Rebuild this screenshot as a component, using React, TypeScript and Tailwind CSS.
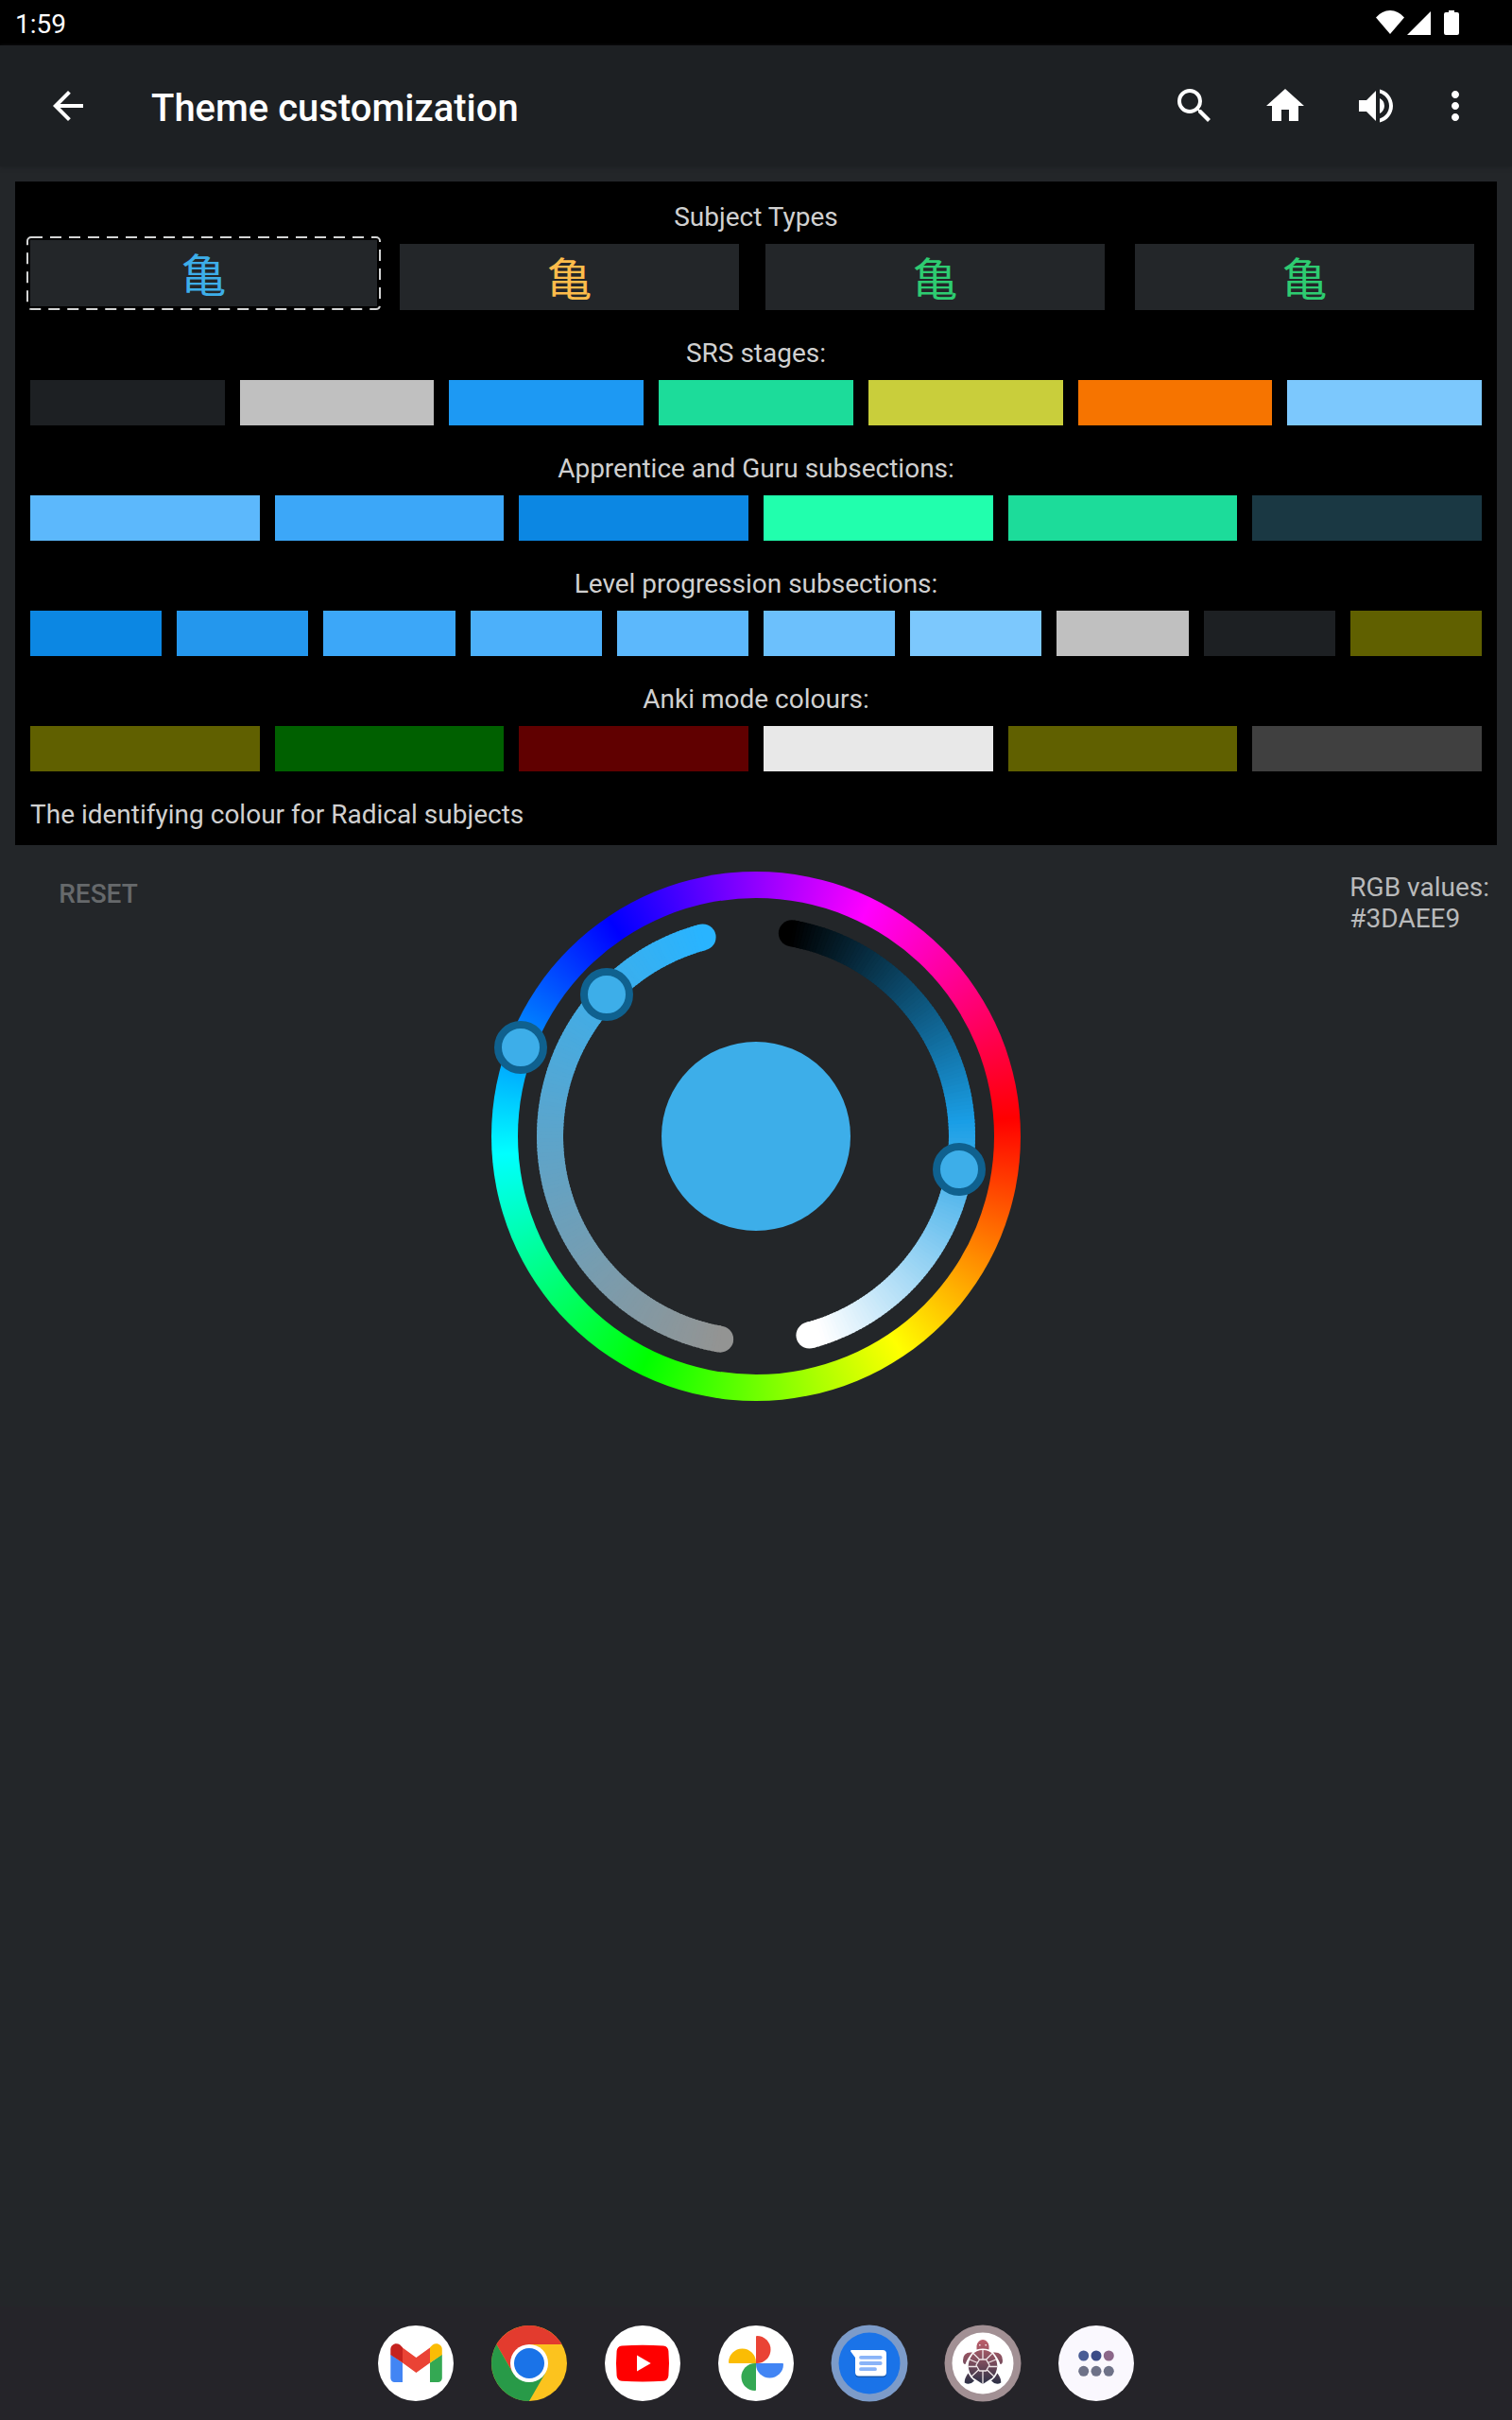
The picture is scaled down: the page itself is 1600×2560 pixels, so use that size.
import { useState } from "react";
import type { ReactNode } from "react";
import { MdArrowBack, MdHome, MdMoreVert, MdSearch, MdVolumeUp } from "react-icons/md";

type Swatch = { name: string; fill: string };

const SUBJECTS = [
  { name: "Radical", tile: "-mt-1 h-[70px] flex-[367]", text: "text-[#3daee9]" },
  { name: "Kanji", tile: "ml-6 h-[70px] flex-[359]", text: "text-[#fdbc4b]" },
  { name: "Vocabulary", tile: "ml-7 h-[70px] flex-[359]", text: "text-[#2ecc71]" },
  { name: "Kana vocabulary", tile: "ml-8 h-[70px] flex-[359]", text: "text-[#2ecc71]" },
];

const STAGES: Swatch[] = [
  { name: "Locked", fill: "bg-[#1d2023]" },
  { name: "Initiate", fill: "bg-[#c0c0c0]" },
  { name: "Apprentice", fill: "bg-[#1d99f3]" },
  { name: "Guru", fill: "bg-[#1cdc9a]" },
  { name: "Master", fill: "bg-[#c9ce3b]" },
  { name: "Enlightened", fill: "bg-[#f67400]" },
  { name: "Burned", fill: "bg-[#7cc8fd]" },
];

const SUBSECTIONS: Swatch[] = [
  { name: "Apprentice 1", fill: "bg-[#5cb8fc]" },
  { name: "Apprentice 2", fill: "bg-[#3ca7f8]" },
  { name: "Apprentice 3", fill: "bg-[#0c87e3]" },
  { name: "Guru 1", fill: "bg-[#21ffad]" },
  { name: "Guru 2", fill: "bg-[#1cdc9a]" },
  { name: "Ten or more", fill: "bg-[#1a3843]" },
];

const LEVELS: Swatch[] = [
  { name: "Progress 1", fill: "bg-[#0c87e3]" },
  { name: "Progress 2", fill: "bg-[#2497ed]" },
  { name: "Progress 3", fill: "bg-[#3ca7f8]" },
  { name: "Progress 4", fill: "bg-[#4cb0fa]" },
  { name: "Progress 5", fill: "bg-[#5cb8fc]" },
  { name: "Progress 6", fill: "bg-[#6cc0fc]" },
  { name: "Progress 7", fill: "bg-[#7cc8fd]" },
  { name: "Initiate level", fill: "bg-[#c0c0c0]" },
  { name: "Locked level", fill: "bg-[#1d2023]" },
  { name: "Bookmark", fill: "bg-[#606000]" },
];

const ANKI: Swatch[] = [
  { name: "Show", fill: "bg-[#606000]" },
  { name: "Correct", fill: "bg-[#006000]" },
  { name: "Incorrect", fill: "bg-[#600000]" },
  { name: "Text", fill: "bg-[#e8e8e8]" },
  { name: "Ignore", fill: "bg-[#606000]" },
  { name: "Next", fill: "bg-[#404040]" },
];

function Section({ title, columns, swatches }: { title: string; columns: string; swatches: Swatch[] }) {
  return (
    <section>
      <h2 className="pt-[30px] pb-3 text-center">{title}</h2>
      <div className={`grid gap-4 ${columns}`}>
        {swatches.map((s) => (
          <button key={s.name} type="button" aria-label={s.name} className={`h-12 ${s.fill}`} />
        ))}
      </div>
    </section>
  );
}

const point = (radius: number, degrees: number) => {
  const a = (degrees * Math.PI) / 180;
  return { x: radius * Math.sin(a), y: -radius * Math.cos(a) };
};

/** A round-capped arc whose colour follows its sweep; angles run clockwise from the top. */
function GradientArc({ from, to, color }: { from: number; to: number; color: (t: number) => string }) {
  const steps = 156;
  const radius = 218;
  const start = point(radius, from);
  const end = point(radius, to);
  const span = (to - from) / steps;
  return (
    <g>
      <circle cx={start.x} cy={start.y} r={14} fill={color(0)} />
      <circle cx={end.x} cy={end.y} r={14} fill={color(1)} />
      {Array.from({ length: steps }, (_, i) => {
        const a = point(radius, from + span * i);
        const b = point(radius, from + span * (i + (i < steps - 1 ? 1.5 : 1)));
        return (
          <line key={i} x1={a.x} y1={a.y} x2={b.x} y2={b.y} strokeWidth={28} stroke={color((i + 0.5) / steps)} />
        );
      })}
    </g>
  );
}

const saturation = (t: number) =>
  `rgb(${Math.round(41 + 106 * t)}, ${Math.round(180 - 32 * t)}, ${Math.round(255 - 108 * t)})`;
const lightness = (t: number) => `hsl(201, 80%, ${Math.min(100, Math.round(t * 1020) / 10)}%)`;

function Knob({ x, y }: { x: number; y: number }) {
  return <circle cx={x} cy={y} r={24} fill="#3daee9" stroke="#0f618f" strokeWidth={8} />;
}

function ColorWheel() {
  return (
    <div className="relative grid size-[560px] place-items-center rounded-full bg-[conic-gradient(from_86deg,#f00,#ff0,#0f0,#0ff,#00f,#f0f,#f00)]">
      <div className="size-[504px] rounded-full bg-[#232629]" />
      <svg viewBox="-280 -280 560 560" className="absolute inset-0 overflow-visible" aria-hidden="true">
        <GradientArc from={-15} to={-170} color={saturation} />
        <GradientArc from={10} to={165} color={lightness} />
        <circle r={100} fill="#3daee9" />
        <Knob x={-249} y={-94} />
        <Knob x={-158} y={-150} />
        <Knob x={215} y={35} />
      </svg>
      <input type="range" aria-label="Hue" min={0} max={360} defaultValue={201} className="sr-only" />
      <input type="range" aria-label="Saturation" min={0} max={100} defaultValue={80} className="sr-only" />
      <input type="range" aria-label="Lightness" min={0} max={100} defaultValue={58} className="sr-only" />
    </div>
  );
}

function GmailIcon() {
  return (
    <>
      <circle cx="40" cy="40" r="40" fill="#fff" />
      <path d="M13.3 30.5 26 39.5V60h-8.5a4.2 4.2 0 0 1-4.2-4.2z" fill="#4285f4" />
      <path d="M67.8 30.5 55 39.5V60h8.6a4.2 4.2 0 0 0 4.2-4.2z" fill="#34a853" />
      <path d="M26 23.5 40.4 34 55 23.5v16L40.4 50 26 39.5z" fill="#ea4335" />
      <path d="M13.3 31v-5.6c0-5.2 5.9-7.9 10-4.8l2.7 2.6v16.3z" fill="#c5221f" />
      <path d="M67.8 31v-5.6c0-5.2-5.9-7.9-10-4.8L55 23.2v16.3z" fill="#fbbc04" />
    </>
  );
}

function ChromeIcon() {
  return (
    <>
      <circle cx="40" cy="40" r="40" fill="#fcc31e" />
      <path d="M5.4 20A40 40 0 0 1 74.6 20H40L22.7 50z" fill="#e33b2e" />
      <path d="M5.4 20A40 40 0 0 0 40 80L57.3 50 22.7 50z" fill="#289a48" />
      <circle cx="40" cy="40" r="20" fill="#fff" />
      <circle cx="40" cy="40" r="16" fill="#1a73e8" />
    </>
  );
}

function YouTubeIcon() {
  return (
    <>
      <circle cx="40" cy="40" r="40" fill="#fff" />
      <path
        d="M18 21.4Q40 20 62 21.4Q67 22 67.4 27Q68.6 40 67.4 53Q67 58.3 62 58.7Q40 60.2 18 58.7Q13 58.3 12.6 53Q11.4 40 12.6 27Q13 22 18 21.4z"
        fill="#f00"
      />
      <path d="M34 31.5 48.7 40 34 48.4z" fill="#fff" />
    </>
  );
}

function PhotosIcon() {
  return (
    <>
      <circle cx="40" cy="40" r="40" fill="#fff" />
      <path d="M40 40V12Q40 11 41 11A14.5 14.5 0 0 1 41 40z" fill="#ea4335" />
      <path d="M40 40H68Q69 40 69 41A14.5 14.5 0 0 1 40 41z" fill="#4285f4" />
      <path d="M40 40V68Q40 69 39 69A14.5 14.5 0 0 1 39 40z" fill="#34a853" />
      <path d="M40 40H12Q11 40 11 39A14.5 14.5 0 0 1 40 39z" fill="#fbbc04" />
    </>
  );
}

function MessagesIcon() {
  return (
    <>
      <circle cx="40" cy="40" r="40.5" fill="#7c9bc9" />
      <circle cx="40" cy="40" r="32.5" fill="#1a73e8" />
      <path d="M22 28H54a4 4 0 0 1 4 4V51a4 4 0 0 1-4 4H29a4 4 0 0 1-4-4V34z" fill="#1558b0" />
      <path
        d="M20.8 26H54a4 4 0 0 1 4 4V49.5a4 4 0 0 1-4 4H29a4 4 0 0 1-4-4V34L20.2 27.5Q19.8 26 20.8 26z"
        fill="#fff"
      />
      <path d="M31 33.8H51.7M31 40H51.7M31 46.2H46" stroke="#8ab4f8" strokeWidth="3.8" strokeLinecap="round" />
    </>
  );
}

function TurtleIcon() {
  return (
    <>
      <defs>
        <linearGradient id="turtle" gradientUnits="userSpaceOnUse" x1="40" y1="15" x2="40" y2="62">
          <stop offset="0" stopColor="#bd5c69" />
          <stop offset="0.45" stopColor="#84505f" />
          <stop offset="1" stopColor="#2a3046" />
        </linearGradient>
      </defs>
      <circle cx="40" cy="40" r="40.5" fill="#a29094" />
      <circle cx="40" cy="40" r="32.5" fill="#fff" />
      <g fill="url(#turtle)">
        <path d="M33.5 25.5V21.5Q35 15 40 15T46.5 21.5V25.5Q40 23.5 33.5 25.5z" />
        <path d="M29 28.5Q19 27.5 19 37Q19 41 21.5 41Q23.5 35 29 28.5zM51 28.5Q61 27.5 61 37Q61 41 58.5 41Q56.5 35 51 28.5z" />
        <path d="M24.5 50.5Q20.5 56 20.7 60.5Q26 64 31 58.5Q26.5 55 24.5 50.5zM55.5 50.5Q59.5 56 59.3 60.5Q54 64 49 58.5Q53.5 55 55.5 50.5z" />
        <path d="M40 26Q47 26 51 31Q55.3 37 55.3 43Q55 50 50 55.5L40 62 30 55.5Q25 50 24.7 43Q24.7 37 29 31Q33 26 40 26z" />
      </g>
      <path
        d="M36.5 36h7l3.5 6-3.5 6h-7L33 42zM40 26V36M40 48V62M36.5 36 30 29.5M43.5 36 50 29.5M34.5 39.5 26 36M45.5 39.5 54 36M33 43.5H24.7M47 43.5H55.3M35.5 47 28 54M44.5 47 52 54"
        fill="none"
        stroke="#efe6e8"
        strokeWidth="1.3"
      />
      <path d="M36 20h1.600v1.600H36zM42.400 20H44v1.600H42.400z" fill="#f1d9dc" />
    </>
  );
}

function AllAppsIcon() {
  return (
    <>
      <circle cx="40" cy="40" r="40" fill="#faf8fe" />
      <circle cx="26.7" cy="32" r="5.5" fill="#4a5d95" />
      <circle cx="40" cy="32" r="5.5" fill="#3b4b87" />
      <circle cx="53.3" cy="32" r="5.5" fill="#8c6789" />
      <circle cx="26.7" cy="48.3" r="5.5" fill="#6e7288" />
      <circle cx="40" cy="48.3" r="5.5" fill="#6e7288" />
      <circle cx="53.3" cy="48.3" r="5.5" fill="#6e7288" />
    </>
  );
}

const DOCK: { name: string; icon: ReactNode }[] = [
  { name: "Gmail", icon: <GmailIcon /> },
  { name: "Chrome", icon: <ChromeIcon /> },
  { name: "YouTube", icon: <YouTubeIcon /> },
  { name: "Photos", icon: <PhotosIcon /> },
  { name: "Messages", icon: <MessagesIcon /> },
  { name: "Turtle", icon: <TurtleIcon /> },
  { name: "All apps", icon: <AllAppsIcon /> },
];

function HeaderButton({ label, width, children }: { label: string; width: string; children: ReactNode }) {
  return (
    <button type="button" aria-label={label} className={`grid h-24 place-items-center text-[48px] ${width}`}>
      {children}
    </button>
  );
}

export default function App() {
  const [selected, setSelected] = useState("Radical");

  return (
    <div className="flex min-h-screen flex-col bg-[#232629] font-[Roboto,'Noto_Sans_CJK_JP',sans-serif] text-[28px] leading-8 text-[#d0d0d0]">
      <div className="flex h-12 items-center justify-between bg-black pr-14 pl-4 text-white">
        <time className="pt-1">1:59</time>
        <svg viewBox="0 0 88 26" className="h-[26px] w-[88px]" fill="currentColor" aria-label="Wi-Fi, signal, battery">
          <path d="M0 7.5Q6.5 0 15 0T30 7.5L15 25z" />
          <path d="M33 26 58 1V26z" />
          <path d="M77 0h6v2h3q2 0 2 2V24q0 2-2 2H74q-2 0-2-2V4q0-2 2-2h3z" />
        </svg>
      </div>

      <header className="flex h-32 items-center bg-[#1d2023] px-6 text-white shadow-[0_1px_4px_#1d2023]">
        <HeaderButton label="Back" width="w-24">
          <MdArrowBack />
        </HeaderButton>
        <h1 className="ml-10 flex-1 pt-1.5 text-[40px] leading-[48px] font-medium">Theme customization</h1>
        <HeaderButton label="Search" width="w-24">
          <MdSearch />
        </HeaderButton>
        <HeaderButton label="Home" width="w-24">
          <MdHome />
        </HeaderButton>
        <HeaderButton label="Sound" width="w-24">
          <MdVolumeUp />
        </HeaderButton>
        <HeaderButton label="More options" width="w-[72px]">
          <MdMoreVert />
        </HeaderButton>
      </header>

      <main>
        <div className="mx-4 mt-4 bg-black px-4 pb-4">
          <section>
            <h2 className="pt-[22px] pb-3 text-center">Subject Types</h2>
            <div className="flex items-start pr-2">
              {SUBJECTS.map((s) => (
                <button
                  key={s.name}
                  type="button"
                  aria-label={s.name}
                  aria-pressed={selected === s.name}
                  onClick={() => setSelected(s.name)}
                  className={`relative bg-[#232629] pt-2 text-[48px] leading-[62px] ${s.tile} ${s.text}`}
                >
                  亀
                  {selected === s.name && (
                    <svg
                      className="absolute -inset-[3px] h-[calc(100%+6px)] w-[calc(100%+6px)] overflow-visible"
                      aria-hidden="true"
                    >
                      <rect
                        width="100%"
                        height="100%"
                        rx="4"
                        fill="none"
                        stroke="#d3d4d4"
                        strokeWidth="2"
                        strokeDasharray="12 8"
                      />
                    </svg>
                  )}
                </button>
              ))}
            </div>
          </section>
          <Section title="SRS stages:" columns="grid-cols-7" swatches={STAGES} />
          <Section title="Apprentice and Guru subsections:" columns="grid-cols-6" swatches={SUBSECTIONS} />
          <Section title="Level progression subsections:" columns="grid-cols-10" swatches={LEVELS} />
          <Section title="Anki mode colours:" columns="grid-cols-6" swatches={ANKI} />
          <p className="pt-[30px]">The identifying colour for {selected} subjects</p>
        </div>

        <div className="grid grid-cols-[1fr_auto_1fr] items-start pt-7">
          <button type="button" disabled className="ml-4 h-12 w-44 font-medium text-[#66696b]">
            RESET
          </button>
          <ColorWheel />
          <output className="mr-6 justify-self-end leading-[33px] text-[#b9babb]">
            RGB values:
            <br />
            #3DAEE9
          </output>
        </div>
      </main>

      <nav aria-label="Taskbar" className="mt-auto flex h-[120px] items-center justify-center gap-10 bg-[#252429]">
        {DOCK.map((app) => (
          <button key={app.name} type="button" aria-label={app.name} className="size-20">
            <svg viewBox="0 0 80 80" className="size-20 overflow-visible">
              {app.icon}
            </svg>
          </button>
        ))}
      </nav>
    </div>
  );
}
